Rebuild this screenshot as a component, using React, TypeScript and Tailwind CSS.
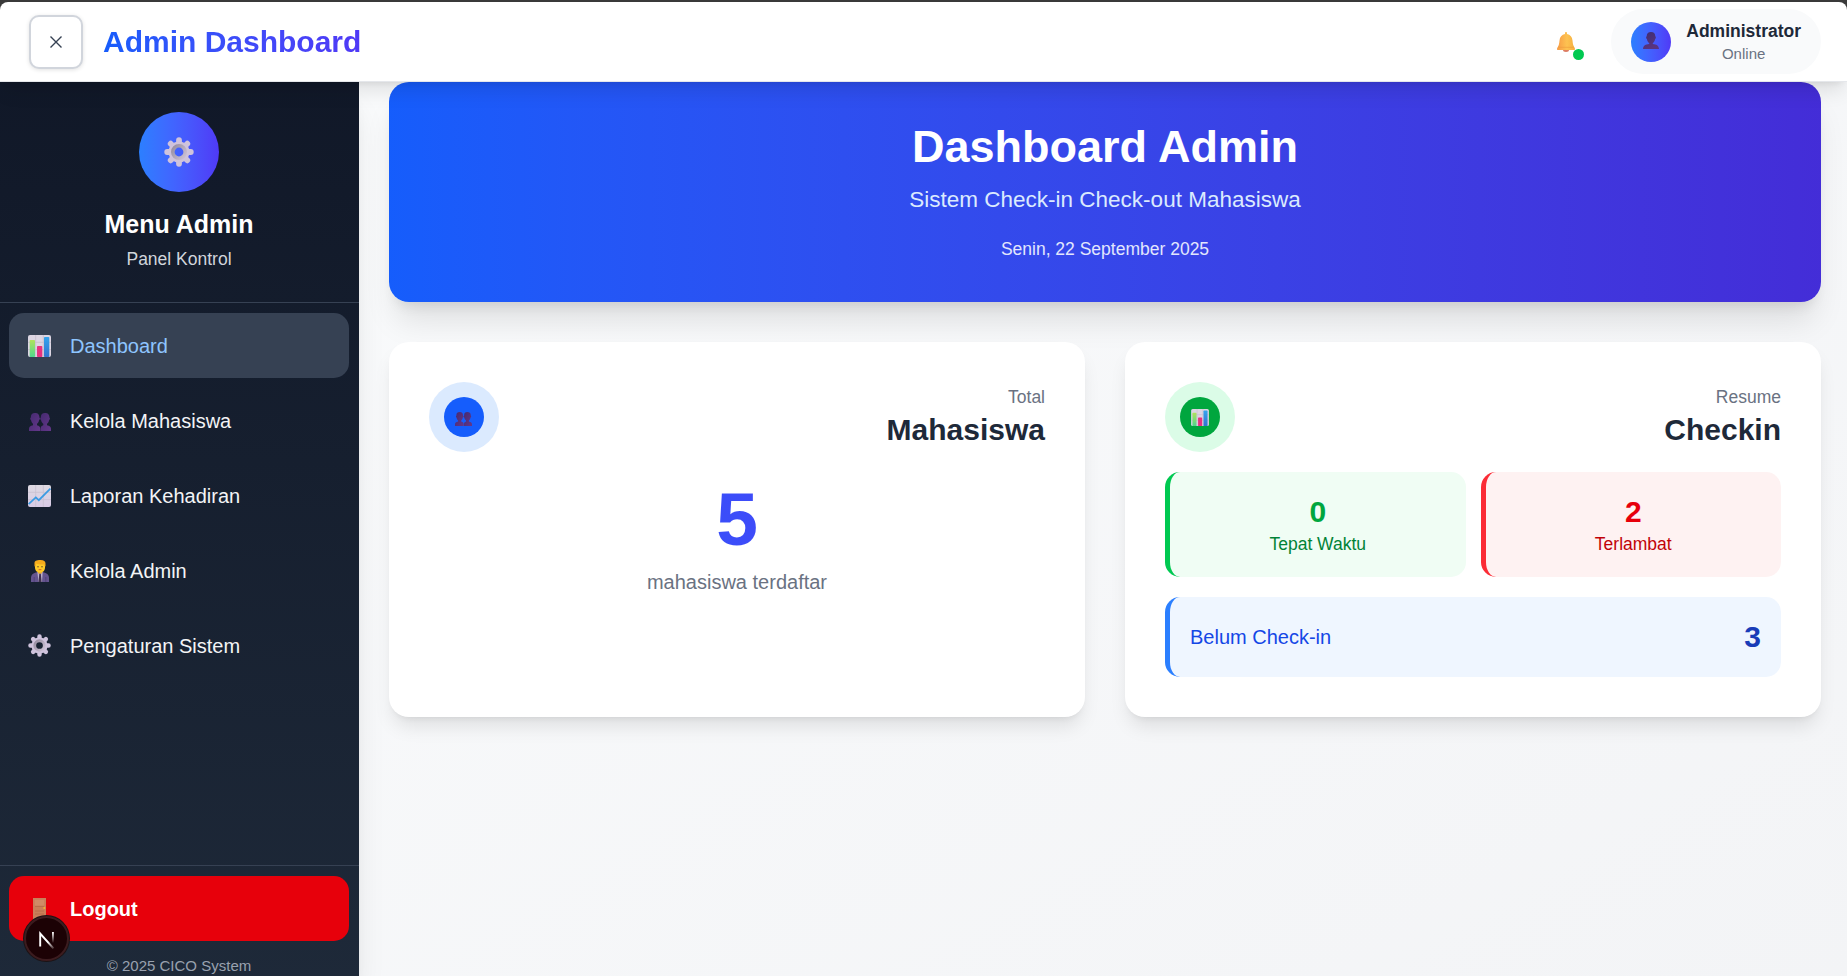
import React from "react";

type IconProps = { className?: string };

function ChartIcon({ className }: IconProps) {
  return (
    <svg viewBox="0 0 23 22" className={className}>
      <defs>
        <linearGradient id="barGreen" x1="0" y1="0" x2="0" y2="1">
          <stop offset="0" stopColor="#b0e25c" />
          <stop offset="1" stopColor="#50d68c" />
        </linearGradient>
        <linearGradient id="barBlue" x1="0" y1="0" x2="0" y2="1">
          <stop offset="0" stopColor="#35a4ee" />
          <stop offset="1" stopColor="#3273cf" />
        </linearGradient>
      </defs>
      <rect width="23" height="22" rx="2" fill="#ddd6e3" />
      <path d="M7.7 0v22M15.3 0v22M0 7.3h23M0 14.6h23" stroke="#c6becc" strokeWidth="0.8" />
      <rect x="1.7" y="5" width="5.3" height="17" rx="0.8" fill="url(#barGreen)" />
      <rect x="9" y="11" width="5.3" height="11" rx="0.8" fill="#e8317f" />
      <rect x="16" y="2" width="5.3" height="20" rx="0.8" fill="url(#barBlue)" />
    </svg>
  );
}

function TrendIcon({ className }: IconProps) {
  return (
    <svg viewBox="0 0 23 22" className={className}>
      <defs>
        <linearGradient id="trendPaper" x1="0" y1="0" x2="0" y2="1">
          <stop offset="0" stopColor="#dedae2" />
          <stop offset="1" stopColor="#d9cbe6" />
        </linearGradient>
      </defs>
      <rect width="23" height="22" rx="2" fill="url(#trendPaper)" />
      <path d="M7.7 0v22M15.3 0v22M0 7.3h23M0 14.6h23" stroke="#c8c0d0" strokeWidth="0.8" />
      <path d="M0.6 19.2L7.8 12.4L10.8 15.2L22.4 3.6" fill="none" stroke="#3a9be3" strokeWidth="1.7" />
    </svg>
  );
}

function PeopleIcon({ className }: IconProps) {
  return (
    <svg viewBox="0 0 22 18" className={className}>
      <defs>
        <linearGradient id="peopleFill" x1="0" y1="0" x2="1" y2="1">
          <stop offset="0" stopColor="#452a70" />
          <stop offset="1" stopColor="#64378a" />
        </linearGradient>
      </defs>
      <g fill="url(#peopleFill)">
        <path d="M1.800 4.500C1.800 1.200 3.300 0 6 0s4.400 1.200 4.400 4.500c.8.4.7 2.300-.3 2.600C9.700 9.400 8.800 10.200 8 10.800v1.400c2.200.5 3.300 1.800 3.300 3.500V18H0v-2.300c0-1.700 1.400-3 4-3.500v-1.400C3.200 10.200 2.500 9.400 2 7.100 1 6.800 1 4.900 1.800 4.500Z" />
        <path d="M11.800 4.500C11.800 1.200 13.300 0 16 0s4.400 1.200 4.400 4.500c.8.4.7 2.300-.3 2.600-.4 2.300-1.300 3.100-2.100 3.700v1.400c2.600.5 4 1.800 4 3.500V18H11.600v-2.300c0-1.700.800-3 2.700-3.500v-1.400c-.8-.6-1.800-1.400-2.300-3.700C11 6.800 11 4.900 11.800 4.500Z" />
      </g>
    </svg>
  );
}

function PersonIcon({ className }: IconProps) {
  return (
    <svg viewBox="0 0 16 17" className={className}>
      <defs>
        <linearGradient id="personFill" x1="0" y1="0" x2="0.4" y2="1">
          <stop offset="0" stopColor="#3e2d70" />
          <stop offset="1" stopColor="#5a3480" />
        </linearGradient>
      </defs>
      <path
        fill="url(#personFill)"
        d="M8 0C5.300 0 3.700 1.500 3.700 4.200c-.8.3-.8 2.400.2 2.700C4.300 9 5.100 10.200 6.200 10.900v1.200C2.500 12.500.3 13.700 0 17h16c-.3-3.300-2.500-4.500-6.200-4.900v-1.200c1.100-.7 1.900-1.900 2.300-4 1-.3 1-2.400.2-2.700C12.300 1.500 10.700 0 8 0Z"
      />
    </svg>
  );
}

function GearIcon({ className }: IconProps) {
  return (
    <svg viewBox="-15 -15 30 30" className={className}>
      <defs>
        <linearGradient id="gearRing" x1="0" y1="0" x2="1" y2="0.8">
          <stop offset="0" stopColor="#968da0" />
          <stop offset="1" stopColor="#c8bdd0" />
        </linearGradient>
      </defs>
      <g stroke="#cfc3dc" strokeWidth="5.800" strokeLinecap="round">
        <path d="M0 -11.800V-8M0 11.800V8M-11.800 0H-8M11.800 0H8M-8.300 -8.300L-6 -6M8.300 8.300L6 6M-8.300 8.300L-6 6M8.300 -8.300L6 -6" />
      </g>
      <circle r="8" fill="none" stroke="#cfc3dc" strokeWidth="5" />
      <circle r="6.200" fill="none" stroke="url(#gearRing)" strokeWidth="3.600" />
    </svg>
  );
}

function OfficeWorkerIcon({ className }: IconProps) {
  return (
    <svg viewBox="0 0 18 22" className={className}>
      <path d="M0 22v-4c0-3.500 2.500-5.200 6-5.800h6c3.500.6 6 2.300 6 5.800v4Z" fill="#64548e" />
      <path d="M6.300 12h5.400L11 22H7.600Z" fill="#b9afcb" />
      <path d="M8.300 13.500h1.500l.8 8.500H7.500Z" fill="#40304f" />
      <path d="M3.200 17v5M14.800 17v5" stroke="#4c3d75" strokeWidth="0.8" />
      <rect x="7" y="9" width="4" height="4.500" fill="#eaa52c" />
      <path d="M4 5C4 2 6 1 9 1s5 1 5 4v2.500c0 3-2 5-5 5s-5-2-5-5Z" fill="#ffc928" />
      <path d="M3.500 6.500V3.200C3.500 1 5.200 0 9.500 0c3.500 0 5 1.200 5 3.500v3l-1.200-.7V4.500C10.500 4.800 7 4.400 5.300 3.600L4.800 6Z" fill="#f7ab1c" />
      <circle cx="7" cy="6.700" r="0.700" fill="#55402d" />
      <circle cx="11" cy="6.700" r="0.700" fill="#55402d" />
      <path d="M7.600 9.700h2.800" stroke="#d2552a" strokeWidth="0.900" />
    </svg>
  );
}

function BellIcon({ className }: IconProps) {
  return (
    <svg viewBox="0 0 18 20" className={className}>
      <defs>
        <linearGradient id="bellFill" x1="0" y1="0" x2="1" y2="0">
          <stop offset="0" stopColor="#f79b46" />
          <stop offset="0.550" stopColor="#fdc251" />
          <stop offset="1" stopColor="#f5b03f" />
        </linearGradient>
      </defs>
      <ellipse cx="9" cy="18" rx="3" ry="1.900" fill="#dd7d62" />
      <path
        fill="url(#bellFill)"
        d="M8 1.200C8 .4 8.400 0 9 0s1 .4 1 1.200v.9c3.300.6 5.200 3 5.500 6.400.3 3.300.7 5 1.700 6.500.5.600.8 1.200.8 2 0 .6-.4 1-1 1H1c-.6 0-1-.4-1-1 0-.8.3-1.400.8-2C1.800 13.500 2.200 11.800 2.500 8.500 2.800 5.100 4.700 2.700 8 2.100Z"
      />
      <path d="M1.300 15.300h15.400" stroke="#eb9a3c" strokeWidth="0.600" />
    </svg>
  );
}

function DoorIcon({ className }: IconProps) {
  return (
    <svg viewBox="0 0 13 22" className={className}>
      <rect width="13" height="22" fill="#c97f59" />
      <rect x="1.800" y="1.800" width="9.400" height="5.700" fill="#d08b66" />
      <path d="M2 8.500h9M2 13h9M2 16h9" stroke="#b56d49" strokeWidth="0.900" />
      <circle cx="11.300" cy="10" r="1" fill="#f5b52c" />
    </svg>
  );
}

function FrameworkBadge() {
  return (
    <div className="absolute bottom-[15px] left-6 flex size-[45px] items-center justify-center rounded-full border-2 border-[#3c1c1f] bg-[#1c0205] shadow-[0_0_0_1px_#1b1214]">
      <svg viewBox="0 0 16 18" className="mt-[2px] h-[18px] w-4">
        <defs>
          <linearGradient id="markDiagonal" gradientUnits="userSpaceOnUse" x1="9" y1="11" x2="15" y2="18">
            <stop offset="0" stopColor="#fff" />
            <stop offset="1" stopColor="#fff" stopOpacity="0.100" />
          </linearGradient>
          <linearGradient id="markStem" x1="0" y1="0" x2="0" y2="1">
            <stop offset="0" stopColor="#fff" />
            <stop offset="1" stopColor="#fff" stopOpacity="0" />
          </linearGradient>
        </defs>
        <path d="M1.200 15.500V2.500L14.500 17.500" fill="none" stroke="url(#markDiagonal)" strokeWidth="1.900" />
        <rect x="13" y="1" width="1.900" height="11" fill="url(#markStem)" />
      </svg>
    </div>
  );
}

const menu = [
  { label: "Dashboard", icon: <ChartIcon className="h-[22px] w-[23px]" />, active: true },
  { label: "Kelola Mahasiswa", icon: <PeopleIcon className="mt-[3px] h-[18px] w-[22px]" /> },
  { label: "Laporan Kehadiran", icon: <TrendIcon className="h-[22px] w-[23px]" /> },
  { label: "Kelola Admin", icon: <OfficeWorkerIcon className="h-[22px] w-[18px]" /> },
  { label: "Pengaturan Sistem", icon: <GearIcon className="size-[23px]" /> },
];

function Header() {
  return (
    <header className="relative z-20 flex h-20 shrink-0 items-center justify-between rounded-t-lg border-b border-gray-200 bg-white pl-[29px] pr-[26px] shadow-[0_12.5px_19px_-4px_rgba(0,0,0,0.1),0_5px_7.500px_-5px_rgba(0,0,0,0.1)]">
      <div className="flex items-center gap-5">
        <button className="flex size-[54px] items-center justify-center rounded-[10px] border-2 border-gray-300 bg-white shadow-[0_1px_4px_rgba(0,0,0,0.12)]">
          <svg viewBox="0 0 12 12" className="size-3">
            <path d="M0.500 0.500L11.500 11.500M11.500 0.500L0.500 11.500" stroke="#364153" strokeWidth="1.400" />
          </svg>
        </button>
        <h1 className="bg-gradient-to-r from-blue-600 to-indigo-600 bg-clip-text text-[30px] font-bold leading-10 text-transparent">
          Admin Dashboard
        </h1>
      </div>
      <div className="flex items-center">
        <div className="relative mr-[36px] h-5 w-[18px]">
          <BellIcon className="h-5 w-[18px]" />
          <span className="absolute -bottom-2 -right-[9px] size-[11px] rounded-full bg-green-500" />
        </div>
        <div className="flex h-[65px] items-center gap-[15px] rounded-full bg-gray-50 px-5">
          <div className="flex size-10 items-center justify-center rounded-full bg-gradient-to-r from-blue-500 to-indigo-600">
            <PersonIcon className="mb-[3px] h-[17px] w-4" />
          </div>
          <div className="text-center">
            <p className="text-[17.5px] font-semibold leading-[25px] text-gray-800">Administrator</p>
            <p className="text-[15px] leading-5 text-gray-500">Online</p>
          </div>
        </div>
      </div>
    </header>
  );
}

function Sidebar() {
  return (
    <aside className="relative z-10 flex w-[359px] shrink-0 flex-col bg-gradient-to-b from-gray-900 to-gray-800 shadow-[0_25px_31px_-6px_rgba(0,0,0,0.1),0_10px_12.5px_-7.5px_rgba(0,0,0,0.1)]">
      <div className="flex h-[221px] shrink-0 flex-col items-center border-b border-gray-700 pr-px pt-[30px]">
        <div className="flex size-20 items-center justify-center rounded-full bg-gradient-to-r from-blue-500 to-indigo-600">
          <GearIcon className="size-[30px]" />
        </div>
        <h2 className="mt-[15px] text-[25px] font-bold leading-[35px] text-white">Menu Admin</h2>
        <p className="mt-[5px] text-[17.5px] leading-[25px] text-gray-300">Panel Kontrol</p>
      </div>
      <nav className="flex grow flex-col gap-2.5 pl-[9px] pr-2.5 pt-2.5">
        {menu.map((item) => (
          <a
            key={item.label}
            className={
              item.active
                ? "flex h-[65px] items-center rounded-[15px] bg-gray-700 pl-[19px] text-blue-300"
                : "flex h-[65px] items-center rounded-[15px] pl-[19px] text-gray-100"
            }
          >
            <span className="flex w-[23px] justify-center">{item.icon}</span>
            <span className="ml-[19px] text-[20px] font-medium leading-[30px]">{item.label}</span>
          </a>
        ))}
      </nav>
      <div className="h-[111px] shrink-0 border-t border-gray-700 pl-[9px] pr-2.5 pt-2.5">
        <button className="flex h-[65px] w-full items-center rounded-[15px] bg-[#e7000b] pl-[19px] text-white">
          <span className="flex w-[23px] justify-center">
            <DoorIcon className="h-[22px] w-[13px]" />
          </span>
          <span className="ml-[19px] text-[20px] font-semibold leading-[30px]">Logout</span>
        </button>
        <p className="mt-[15px] text-center text-[15px] leading-5 text-gray-400">© 2025 CICO System</p>
      </div>
      <FrameworkBadge />
    </aside>
  );
}

type CardProps = { icon: React.ReactNode; caption: string; title: string; children: React.ReactNode };

function Card({ icon, caption, title, children }: CardProps) {
  return (
    <section className="h-[375px] rounded-[20px] bg-white p-10 shadow-[0_12.5px_19px_-4px_rgba(0,0,0,0.1),0_5px_7.5px_-5px_rgba(0,0,0,0.1)]">
      <div className="flex h-[70px] items-center justify-between">
        {icon}
        <div className="text-right">
          <p className="text-[17.5px] leading-[25px] text-gray-500">{caption}</p>
          <p className="text-[30px] font-bold leading-10 text-gray-800">{title}</p>
        </div>
      </div>
      {children}
    </section>
  );
}

export default function App() {
  return (
    <div className="flex h-[976px] w-full flex-col overflow-hidden bg-[#3a3a3a] pt-[2px] font-['Liberation_Sans',Arial,sans-serif] antialiased">
      <Header />
      <div className="flex min-h-0 grow">
        <Sidebar />
        <main className="flex grow flex-col gap-10 bg-gradient-to-br from-gray-50 to-gray-100 pl-[30px] pr-[26px]">
          <section className="flex h-[220px] flex-col items-center rounded-[20px] bg-gradient-to-r from-blue-600 to-indigo-700 pt-10 text-center shadow-[0_25px_31px_-6px_rgba(0,0,0,0.1),0_10px_12.5px_-7.5px_rgba(0,0,0,0.1)]">
            <h2 className="text-[45px] font-bold leading-[50px] text-white">Dashboard Admin</h2>
            <p className="mt-[10px] text-[22.5px] leading-[35px] text-blue-100">Sistem Check-in Check-out Mahasiswa</p>
            <p className="mt-5 text-[17.5px] leading-[25px] text-[#e2e6fd]">Senin, 22 September 2025</p>
          </section>
          <div className="grid grid-cols-2 gap-10">
            <Card
              caption="Total"
              title="Mahasiswa"
              icon={
                <div className="flex size-[70px] items-center justify-center rounded-full bg-blue-100">
                  <div className="flex size-10 items-center justify-center rounded-full bg-blue-600">
                    <PeopleIcon className="mr-px mt-1 h-[14px] w-[17px]" />
                  </div>
                </div>
              }
            >
              <div className="pt-[30px] text-center">
                <p className="bg-gradient-to-r from-blue-600 to-indigo-600 bg-clip-text text-[75px] font-bold leading-[75px] text-transparent">
                  5
                </p>
                <p className="mt-[10px] text-[20px] leading-[30px] text-gray-500">mahasiswa terdaftar</p>
              </div>
            </Card>
            <Card
              caption="Resume"
              title="Checkin"
              icon={
                <div className="flex size-[70px] items-center justify-center rounded-full bg-green-100">
                  <div className="flex size-10 items-center justify-center rounded-full bg-green-600">
                    <ChartIcon className="h-[17px] w-[18px]" />
                  </div>
                </div>
              }
            >
              <div className="mt-5 grid grid-cols-2 gap-[15px]">
                <div className="h-[105px] rounded-[15px] border-l-[5px] border-green-500 bg-green-50 pt-5 text-center">
                  <p className="text-[30px] font-bold leading-10 text-green-600">0</p>
                  <p className="text-[17.5px] leading-[25px] text-green-700">Tepat Waktu</p>
                </div>
                <div className="h-[105px] rounded-[15px] border-l-[5px] border-red-500 bg-red-50 pt-5 text-center">
                  <p className="text-[30px] font-bold leading-10 text-red-600">2</p>
                  <p className="text-[17.5px] leading-[25px] text-red-700">Terlambat</p>
                </div>
              </div>
              <div className="mt-5 flex h-20 items-center justify-between rounded-[15px] border-l-[5px] border-blue-500 bg-blue-50 px-5">
                <span className="text-[20px] leading-[30px] text-blue-700">Belum Check-in</span>
                <span className="text-[30px] font-bold leading-10 text-blue-800">3</span>
              </div>
            </Card>
          </div>
        </main>
      </div>
    </div>
  );
}
